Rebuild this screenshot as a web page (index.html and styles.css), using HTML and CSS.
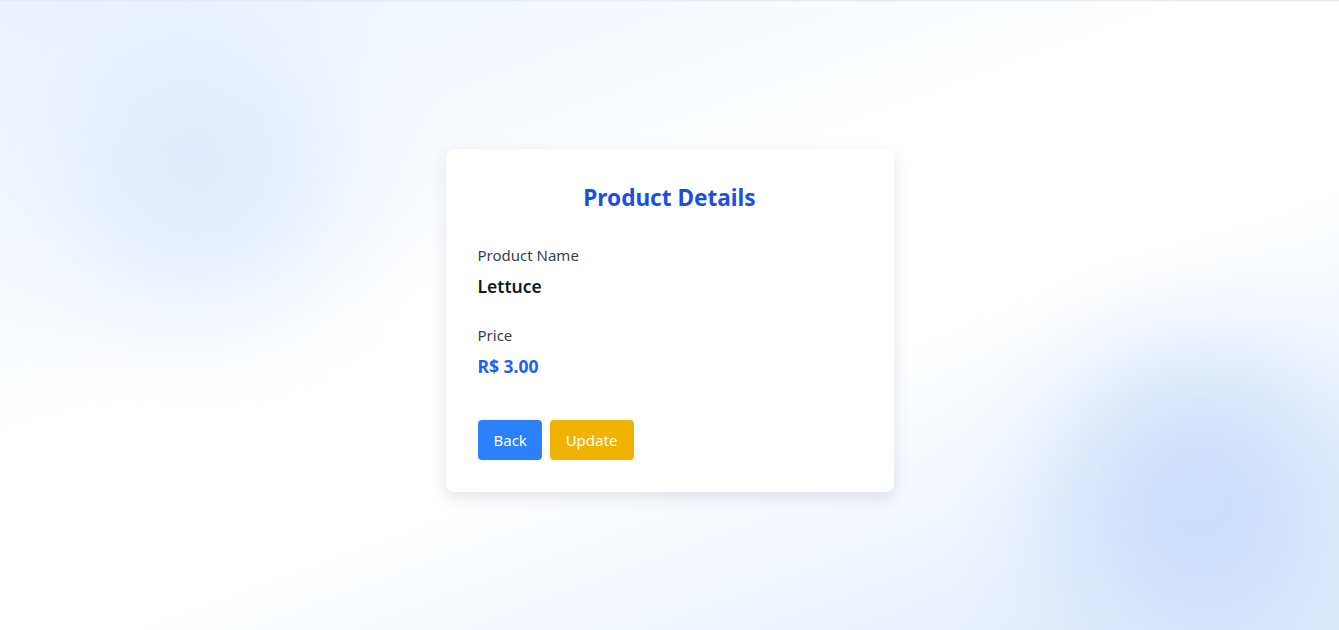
FILE: index.html
```html
<!DOCTYPE html>
<html lang="en">
<head>
<meta charset="utf-8">
<title>Product Details</title>
<link rel="stylesheet" href="styles.css">
</head>
<body>
<div class="topline"></div>
<main class="page">
  <div class="blob blob-left"></div>
  <div class="blob blob-right"></div>
  <section class="card">
    <h1 class="title">Product Details</h1>
    <div class="field">
      <div class="label">Product Name</div>
      <div class="value">Lettuce</div>
    </div>
    <div class="field">
      <div class="label">Price</div>
      <div class="value price">R$ 3.00</div>
    </div>
    <div class="actions">
      <button class="btn btn-back">Back</button>
      <button class="btn btn-update">Update</button>
    </div>
  </section>
</main>
</body>
</html>
```

FILE: styles.css
```css
* { box-sizing: border-box; }
html, body { margin: 0; height: 100%; }
body {
  font-family: "Noto Sans", "Open Sans", sans-serif;
  background: linear-gradient(160deg, #eaf2fe 0%, #ffffff 40%, #ffffff 60%, #dfeafc 100%);
  overflow: hidden;
}
.topline {
  height: 2px;
  background: linear-gradient(to bottom, #e3e7ef, rgba(255,255,255,0));
  position: absolute;
  top: 0; left: 0; right: 0;
  z-index: 2;
}
.page {
  position: relative;
  height: 630px;
  padding-top: 10px;
  display: flex;
  align-items: center;
  justify-content: center;
}
.blob {
  position: absolute;
  border-radius: 50%;
  filter: blur(60px);
}
.blob-left {
  left: 60px; top: 40px;
  width: 280px; height: 270px;
  background: rgba(213, 229, 253, 0.65);
}
.blob-right {
  left: 1060px; top: 360px;
  width: 280px; height: 290px;
  background: rgba(200, 220, 252, 0.9);
}
.card {
  position: relative;
  z-index: 1;
  width: 448px;
  background: #fff;
  border-radius: 8px;
  box-shadow: 0 6px 16px rgba(30, 50, 90, 0.12);
  padding: 32px 32px;
}
.title {
  margin: 0 0 30px;
  text-align: center;
  font-size: 22.6px;
  font-weight: 700;
  color: #1b4fe0;
  line-height: 34px;
}
.field { margin-bottom: 28px; }
.label {
  font-size: 15px;
  color: #3a3f47;
  line-height: 20px;
  margin-bottom: 11px;
}
.value {
  font-size: 17.5px;
  font-weight: 600;
  color: #141821;
  line-height: 21px;
}
.value.price { color: #1e60f0; font-weight: 700; }
.actions {
  display: flex;
  gap: 8px;
  margin-top: 43px;
}
.btn {
  font-family: inherit;
  font-size: 15px;
  color: #fff;
  border: none;
  border-radius: 4px;
  height: 40px;
  padding: 0 16px;
  cursor: pointer;
}
.btn-back { background: #2d80fb; width: 64px; }
.btn-update { background: #f0b301; width: 84px; }
```
